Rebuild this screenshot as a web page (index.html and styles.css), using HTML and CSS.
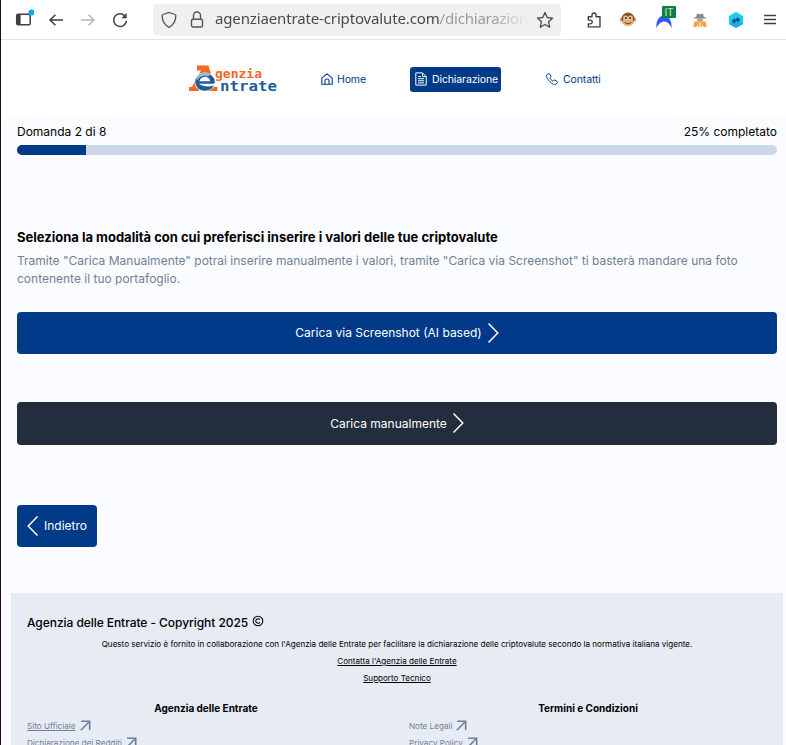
FILE: index.html
```html
<!DOCTYPE html>
<html lang="it">
<head>
    <meta charset="UTF-8">
    <meta name="viewport" content="width=device-width, initial-scale=1.0">
    <title>Dichiarazione</title>
    <link rel="stylesheet" href="styles.css">
</head>
<body>

    <!-- Barra del browser -->
    <div class="toolbar">
        <svg class="icon-sidebar" width="20" height="20" viewBox="0 0 20 20">
            <rect x="2.7" y="5.2" width="13.5" height="10.6" rx="1.5" fill="none" stroke="#3f3f44" stroke-width="1.5"/>
            <path d="M3 5.5h3.6v10H3z" fill="#3f3f44"/>
            <circle cx="17.500" cy="3.500" r="3" fill="#00adf8"/>
        </svg>
        <svg class="icon-back" width="16" height="16" viewBox="0 0 16 16" fill="none" stroke="#3f3f44" stroke-width="1.5">
            <path d="M15 8H2M7.5 2.7L2 8l5.500 5.300"/>
        </svg>
        <svg class="icon-forward" width="16" height="16" viewBox="0 0 16 16" fill="none" stroke="#b5b5b8" stroke-width="1.5">
            <path d="M0 8h13M7.500 2.700L13 8l-5.500 5.300"/>
        </svg>
        <svg class="icon-reload" width="16" height="16" viewBox="0 0 16 16">
            <path d="M12.600 3.600A6.400 6.400 0 1 0 14.400 8.800" fill="none" stroke="#3f3f44" stroke-width="1.500"/>
            <path d="M14.700 1v5.300H9.400z" fill="#3f3f44"/>
        </svg>
        <div class="urlbar">
            <svg width="16" height="18" viewBox="0 0 16 18" fill="none" stroke="#55555a" stroke-width="1.300">
                <path d="M8 1.500l6 2c.7.200.8.600.8 1.300 0 5.200-2.300 9.200-6.800 11.500C3.500 14 1.200 10 1.200 4.800c0-.7.100-1.100.8-1.300z"/>
            </svg>
            <svg class="icon-lock" width="14" height="18" viewBox="0 0 14 18" fill="none" stroke="#55555a" stroke-width="1.400">
                <rect x="1.500" y="8.200" width="11" height="7.800" rx="1.500"/>
                <path d="M3.500 8V4.500a3.500 3.500 0 0 1 7 0V8"/>
            </svg>
            <div class="url">agenziaentrate-criptovalute.com<span>/dichiarazion</span></div>
            <svg class="icon-star" width="18" height="18" viewBox="0 0 18 18" fill="none" stroke="#4a4a50" stroke-width="1.300" stroke-linejoin="round">
                <path d="M9 1.500l2.200 5 5.400.6-4 3.700 1.100 5.400L9 13.500l-4.700 2.700 1.100-5.400-4-3.700 5.400-.6z"/>
            </svg>
        </div>
        <svg class="icon-puzzle" width="16" height="18" viewBox="0 0 16 18" fill="none" stroke="#3f3f44" stroke-width="1.400" stroke-linejoin="round">
            <path d="M2.300 5.700H6V4a2 2 0 0 1 4 0v1.700h4v10.200H2.300v-3h2a1.900 1.900 0 0 0 0-3.800h-2z"/>
        </svg>
        <svg class="icon-monkey" width="16" height="16" viewBox="0 0 16 16">
            <circle cx="2" cy="7.500" r="2" fill="#d08a4c"/>
            <circle cx="14" cy="7.500" r="2" fill="#d08a4c"/>
            <circle cx="8" cy="7" r="6.500" fill="#8a5228"/>
            <ellipse cx="8" cy="10" rx="5.800" ry="4" fill="#e5b07c"/>
            <circle cx="5.600" cy="6" r="2.500" fill="#edbd90"/>
            <circle cx="10.400" cy="6" r="2.500" fill="#edbd90"/>
            <circle cx="5.900" cy="6" r=".9" fill="#222"/>
            <circle cx="10.100" cy="6" r=".9" fill="#222"/>
            <path d="M4.500 10.500q3.500 2.500 7 0" fill="none" stroke="#7a3b20"/>
        </svg>
        <div class="ext">
            <svg width="16" height="14" viewBox="0 0 16 14">
                <path d="M.4 13C0 6 3 .5 8 .5s8 5.500 7.600 12.500C14.500 10 12 7 8.500 6.500 5 6.500 2.500 9 .4 13z" fill="#3157f5"/>
            </svg>
            <span class="ext-badge">IT</span>
        </div>
        <svg class="icon-spy" width="14" height="16" viewBox="0 0 14 16">
            <path d="M4 1.500l3 .7 3-.7.8 3.300 2 .8v1H1.200v-1l2-.8z" fill="#8a8a8a"/>
            <path d="M4 6.500h6v1.800L7 10.500 4 8.300z" fill="#a9a39c"/>
            <path d="M1 10l4-1 2 2 2-2 4 1 .5 5h-3l-1-2-1 2h-3l-1-2-1 2h-3z" fill="#f8a23b"/>
            <path d="M7 10.500V15" stroke="#fff"/>
        </svg>
        <svg class="icon-hex" width="16" height="16" viewBox="0 0 16 16">
            <path d="M8 0l7 4v8l-7 4-7-4V4z" fill="#18cdf7"/>
            <path d="M8 8l7 4-7 4-7-4z" fill="#16aefa"/>
            <path d="M3.500 9l3.500-3v1.500h1L9.500 5l3 3L9 10.500V9H8l-1.500 2.500z" fill="#174960"/>
        </svg>
        <svg class="icon-menu" width="12" height="12" viewBox="0 0 12 12" stroke="#3f3f44" stroke-width="1.300">
            <path d="M0 1.500h12M0 5.500h12M0 9.500h12"/>
        </svg>
    </div>

    <header class="header">
        <svg class="logo" width="90" height="30" viewBox="0 0 90 30">
            <path d="M9 1.500h11.500l1.500 5 4.500 16.500h3v4H18v-3l-3-14-6 12h2v5H1v-4h3L13 6.500H9z" fill="#f06a24"/>
            <ellipse cx="17" cy="18" rx="10.500" ry="9.500" fill="#fff"/>
            <ellipse cx="17" cy="18" rx="9.800" ry="8.800" fill="#1f5c9e"/>
            <path d="M8.500 15a9.500 9.500 0 0 1 14-5.500l-2 3c-5-2-9 0-11.500 4z" fill="#9db9d6"/>
            <path d="M11.500 17.300c1-6 10-6 10.800 0z" fill="#fff"/>
            <path d="M11 19.800h18c-3 3-13 4-18 0z" fill="#fff"/>
            <text class="logo-top" x="27" y="14" textLength="47" lengthAdjust="spacingAndGlyphs">genzia</text>
            <text class="logo-bottom" x="32" y="27" textLength="57" lengthAdjust="spacingAndGlyphs">ntrate</text>
        </svg>
        <nav class="nav">
            <a class="nav-link nav-home">
                <svg width="12" height="12" viewBox="0 0 12 12" fill="none" stroke="currentColor" stroke-width="1.100" stroke-linejoin="round">
                    <path d="M.8 5.200L6 .9l5.200 4.300v6.100H.8zM4 11V8a2 2 0 0 1 4 0v3"/>
                </svg>
                Home
            </a>
            <a class="nav-link active">
                <svg width="12" height="14" viewBox="0 0 12 14" fill="none" stroke="currentColor" stroke-width="1">
                    <path d="M.8.900h6.700l3.700 3.700v8.500H.800zM7.500.900v3.700h3.700M3 4.500h3M3 6.700h6M3 8.800h6M3 10.900h6"/>
                </svg>
                Dichiarazione
            </a>
            <a class="nav-link nav-contacts">
                <svg width="12" height="12" viewBox="0 0 12 12" fill="none" stroke="currentColor" stroke-width="1" stroke-linejoin="round">
                    <path d="M2.600.6L1 1.600c-1.300 1.600.3 4.500 2.800 7s5.300 3.800 6.700 2.300l.9-1.400c.2-.4.100-.7-.2-.9L8.900 7.100c-.4-.2-.7-.2-.9.100l-.9 1C5.800 7.600 4.300 6.100 3.800 4.900l1-.9c.3-.3.300-.6.100-.9L3.500.8C3.300.5 3 .4 2.600.6z"/>
                </svg>
                Contatti
            </a>
        </nav>
    </header>

    <main class="content">
        <div class="progress-labels">
            <span>Domanda 2 di 8</span>
            <span>25% completato</span>
        </div>
        <div class="progress"><div class="progress-bar"></div></div>

        <h1>Seleziona la modalità con cui preferisci inserire i valori delle tue criptovalute</h1>
        <p class="description">Tramite "Carica Manualmente" potrai inserire manualmente i valori, tramite "Carica via Screenshot" ti basterà mandare una foto contenente il tuo portafoglio.</p>

        <button class="btn btn-screenshot">
            Carica via Screenshot (AI based)
            <svg width="12" height="22" viewBox="0 0 12 22" fill="none" stroke="currentColor" stroke-width="1.500"><path d="M.5 1.500L9.800 11 .5 20.500"/></svg>
        </button>
        <button class="btn btn-manual">
            Carica manualmente
            <svg width="12" height="22" viewBox="0 0 12 22" fill="none" stroke="currentColor" stroke-width="1.500"><path d="M.5 1.500L9.800 11 .5 20.500"/></svg>
        </button>
        <button class="btn btn-back">
            <svg width="12" height="22" viewBox="0 0 12 22" fill="none" stroke="currentColor" stroke-width="1.500"><path d="M10.500 1.500L1.200 11l9.300 9.500"/></svg>
            Indietro
        </button>
    </main>

    <footer class="footer">
        <div class="copyright">Agenzia delle Entrate - Copyright 2025
            <svg width="12" height="12" viewBox="0 0 12 12" fill="none" stroke="#000" stroke-width="1.100">
                <circle cx="6" cy="6" r="4.800"/>
                <path d="M7.900 4.600a2.300 2.300 0 1 0 0 2.800"/>
            </svg>
        </div>
        <p class="notice">Questo servizio è fornito in collaborazione con l'Agenzia delle Entrate per facilitare la dichiarazione delle criptovalute secondo la normativa italiana vigente.</p>
        <p class="notice"><u>Contatta l'Agenzia delle Entrate</u></p>
        <p class="notice"><u>Supporto Tecnico</u></p>
        <div class="footer-columns">
            <div class="footer-column">
                <h2>Agenzia delle Entrate</h2>
                <div class="footer-link"><u>Sito Ufficiale</u>
                    <svg width="11" height="11" viewBox="0 0 11 11" fill="none" stroke="currentColor" stroke-width="1.600"><path d="M1 1.300h8.700V10M9.500 1.500L.8 10.200"/></svg>
                </div>
                <div class="footer-link"><u>Dichiarazione dei Redditi</u>
                    <svg width="11" height="11" viewBox="0 0 11 11" fill="none" stroke="currentColor" stroke-width="1.600"><path d="M1 1.300h8.700V10M9.500 1.500L.8 10.200"/></svg>
                </div>
            </div>
            <div class="footer-column">
                <h2>Termini e Condizioni</h2>
                <div class="footer-link">Note Legali
                    <svg width="11" height="11" viewBox="0 0 11 11" fill="none" stroke="currentColor" stroke-width="1.600"><path d="M1 1.300h8.700V10M9.500 1.500L.8 10.200"/></svg>
                </div>
                <div class="footer-link">Privacy Policy
                    <svg width="11" height="11" viewBox="0 0 11 11" fill="none" stroke="currentColor" stroke-width="1.600"><path d="M1 1.300h8.700V10M9.500 1.500L.8 10.200"/></svg>
                </div>
            </div>
        </div>
    </footer>

</body>
</html>
```
FILE: styles.css
```css
* {
    box-sizing: border-box;
}
body {
    margin: 0;
    height: 745px;
    overflow: hidden;
    border-left: 1px solid #1a0d14;
    background-color: #fafcff;
    font-family: Inter, "Liberation Sans", sans-serif;
    color: #000;
}
svg {
    display: block;
    flex-shrink: 0;
}

/* toolbar */
.toolbar {
    display: flex;
    align-items: center;
    height: 40px;
    padding-left: 13px;
    background-color: #fff;
    border-bottom: 1px solid #e2e2e4;
}
.icon-sidebar {
    margin-top: -2px;
}
.icon-back {
    margin-left: 14px;
}
.icon-forward {
    margin-left: 17px;
}
.icon-reload {
    margin-left: 15px;
}
.urlbar {
    display: flex;
    align-items: center;
    width: 408px;
    height: 32px;
    margin-left: 25px;
    padding: 0 7px 0 8px;
    border-radius: 4px;
    background-color: #f0f0f1;
}
.icon-lock {
    margin-left: 13px;
}
.url {
    width: 314px;
    margin-top: -3px;
    margin-left: 11px;
    white-space: nowrap;
    font-family: "Noto Sans", "Open Sans", sans-serif;
    font-size: 15px;
    line-height: 22px;
    letter-spacing: -0.14px;
    color: #4a4a4f;
    -webkit-mask-image: linear-gradient(to right, #000 88%, transparent);
    mask-image: linear-gradient(to right, #000 88%, transparent);
}
.url span {
    letter-spacing: -0.2px;
    color: #9b9b9f;
}
.icon-star {
    margin-left: 7px;
}
.icon-puzzle {
    margin-left: 25px;
}
.icon-monkey {
    margin-left: 18px;
}
.ext {
    position: relative;
    width: 20px;
    height: 22px;
    margin-left: 20px;
    padding-top: 6px;
}
.ext-badge {
    position: absolute;
    top: -3px;
    left: 6px;
    width: 14px;
    height: 12px;
    border-radius: 1px;
    background-color: #08804a;
    color: #e7e29a;
    font-size: 10px;
    line-height: 12px;
    text-align: center;
}
.icon-spy {
    margin-left: 17px;
}
.icon-hex {
    margin-left: 21px;
}
.icon-menu {
    margin-left: 20px;
}

/* header */
.header {
    display: flex;
    align-items: center;
    height: 78px;
    padding-left: 187px;
    background-color: #fff;
}
.logo-top, .logo-bottom {
    font-family: "DejaVu Sans Mono", monospace;
    font-weight: bold;
}
.logo-top {
    font-size: 11.5px;
    fill: #f06a24;
}
.logo-bottom {
    font-size: 13.5px;
    fill: #1f5c9e;
}
.nav {
    display: flex;
    align-items: center;
    margin-left: 43px;
}
.nav-link {
    display: flex;
    align-items: center;
    gap: 5px;
    font-size: 10.5px;
    letter-spacing: -0.12px;
    color: #003a88;
}
.nav-home {
    width: 89px;
    gap: 4px;
}
.nav-link.active {
    width: 91px;
    height: 25px;
    padding-left: 5px;
    border-radius: 3px;
    background-color: #003a88;
    color: #fff;
}
.nav-contacts {
    margin-left: 45px;
}

/* content */
.content {
    padding: 5px 9px 0 16px;
}
.progress-labels {
    display: flex;
    justify-content: space-between;
    font-size: 12px;
    line-height: 18px;
}
.progress {
    height: 10px;
    margin-top: 4px;
    border-radius: 5px;
    overflow: hidden;
    background-color: #ccd8e7;
}
.progress-bar {
    width: 69px;
    height: 10px;
    background-color: #003a88;
}
h1 {
    margin: 73px 0 0;
    font-size: 13px;
    font-weight: bold;
    line-height: 18px;
}
.description {
    margin: 6px 0 0;
    font-size: 12px;
    line-height: 18px;
    color: #718096;
}
.btn {
    display: flex;
    align-items: center;
    justify-content: center;
    gap: 6px;
    width: 100%;
    height: 42px;
    padding: 0 0 1px 1px;
    border: none;
    border-radius: 4px;
    background-color: #003a88;
    color: #fff;
    font-family: inherit;
    font-size: 12px;
}
.btn-screenshot {
    margin-top: 24px;
}
.btn-manual {
    height: 43px;
    margin-top: 48px;
    background-color: #222d3d;
}
.btn-back {
    width: 80px;
    margin-top: 60px;
    padding-left: 0;
    gap: 5px;
}

/* footer */
.footer {
    height: 160px;
    margin: 46px 3px 0 10px;
    padding: 20px 16px 0;
    background-color: #e7ebf4;
}
.copyright {
    display: flex;
    gap: 4px;
    font-size: 12px;
    font-weight: 500;
    line-height: 20px;
    letter-spacing: -0.06px;
}
.copyright svg {
    margin-top: 2px;
}
.notice {
    margin: 0;
    font-size: 8.08px;
    line-height: 17px;
    text-align: center;
}
.notice:nth-of-type(1) {
    margin-top: 3px;
}
.footer-columns {
    display: flex;
    margin-top: 13px;
}
.footer-column {
    width: 358px;
}
.footer-column + .footer-column {
    margin-left: 24px;
}
.footer-column h2 {
    margin: 0;
    font-size: 10px;
    line-height: 17px;
    text-align: center;
}
.footer-link {
    display: flex;
    align-items: center;
    gap: 4px;
    height: 17px;
    font-size: 8.15px;
    color: #718096;
}
```
